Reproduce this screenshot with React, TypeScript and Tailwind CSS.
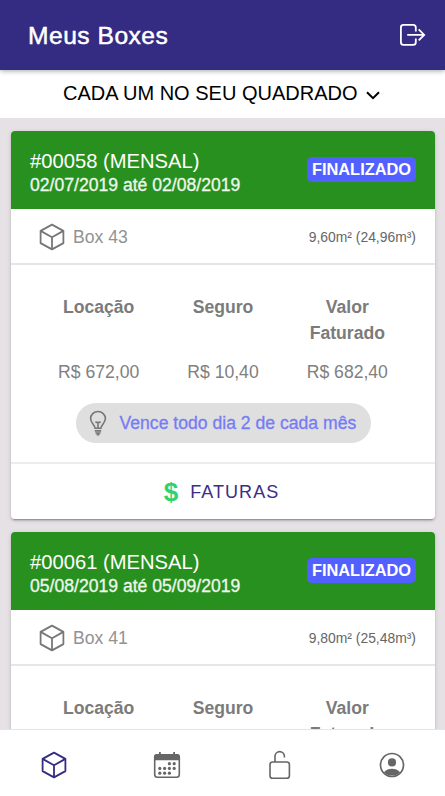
import React from 'react';

interface Box {
  id: string;
  period: string;
  name: string;
  size: string;
  rent: string;
  insurance: string;
  total: string;
  due: string;
}

const BOXES: Box[] = [
  {
    id: '#00058 (MENSAL)',
    period: '02/07/2019 até 02/08/2019',
    name: 'Box 43',
    size: '9,60m² (24,96m³)',
    rent: 'R$ 672,00',
    insurance: 'R$ 10,40',
    total: 'R$ 682,40',
    due: 'Vence todo dia 2 de cada mês',
  },
  {
    id: '#00061 (MENSAL)',
    period: '05/08/2019 até 05/09/2019',
    name: 'Box 41',
    size: '9,80m² (25,48m³)',
    rent: 'R$ 672,00',
    insurance: 'R$ 10,40',
    total: 'R$ 682,40',
    due: 'Vence todo dia 5 de cada mês',
  },
];

const CubeIcon: React.FC<{ className: string }> = ({ className }) => (
  <svg viewBox="0 0 28 28" fill="none" stroke="currentColor" strokeWidth="1.8" strokeLinejoin="round" className={className}>
    <path d="M14 1.6 25.4 7.9V20.1L14 26.4 2.6 20.1V7.9Z" />
    <path d="M2.6 7.9 14 14.3 25.4 7.9M14 14.3V26.4" />
  </svg>
);

const LogoutIcon = () => (
  <svg viewBox="0 0 28 24" fill="none" stroke="currentColor" strokeWidth="1.8" className="w-7 h-6">
    <path d="M16.8 8.4V4.4Q16.8 1.8 14.2 1.8H4.5Q1.9 1.8 1.9 4.4V19.3Q1.9 21.9 4.5 21.9H14.2Q16.8 21.9 16.8 19.3V15.4" />
    <path d="M8.2 11.9H25.4M19.7 6.4 25.2 11.9 19.7 17.4" />
  </svg>
);

const BulbIcon = () => (
  <svg viewBox="0 0 18 26" fill="none" stroke="currentColor" strokeWidth="1.6" className="w-[18px] h-[26px]">
    <path d="M6.1 18.3C6.1 14.8 1.6 13.2 1.6 8.5A7.4 7 0 0 1 16.4 8.5C16.4 13.2 11.9 14.8 11.9 18.3Z" />
    <path d="M9 18V12.6M6.4 11.8Q9 13.4 11.6 11.8" />
    <path d="M5.8 20.9H12.2M6.4 23H11.6M7.6 24.6H10.4" />
  </svg>
);

const CalendarIcon = () => (
  <svg viewBox="0 0 28 28" className="w-7 h-7">
    <rect x="1.7" y="3.7" width="24.6" height="22.6" rx="2.8" fill="none" stroke="currentColor" strokeWidth="1.6" />
    <path d="M1 9.3V6Q1 3 4 3H6V1H7.8V3H20.2V1H22V3H24Q27 3 27 6V9.3Z" fill="currentColor" />
    <g fill="currentColor">
      {[16.4, 21.2].map(x => <circle key={x} cx={x} cy="12.7" r="1.6" />)}
      {[6.8, 11.6, 16.4, 21.2].map(x => <circle key={x} cx={x} cy="17.4" r="1.6" />)}
      {[6.8, 11.6, 16.4].map(x => <circle key={x} cx={x} cy="22.2" r="1.6" />)}
    </g>
  </svg>
);

const LockIcon = () => (
  <svg viewBox="0 0 24 30" fill="none" stroke="currentColor" strokeWidth="1.6" className="w-6 h-[30px]">
    <rect x="2" y="12" width="19.4" height="16.3" rx="2.6" />
    <path d="M7 12V6.3A4.7 4.7 0 0 1 16.4 6.3V7.5" />
  </svg>
);

const PersonIcon = () => (
  <svg viewBox="0 0 26 26" className="w-[26px] h-[26px]">
    <circle cx="13" cy="13" r="11.5" fill="none" stroke="currentColor" strokeWidth="1.7" />
    <circle cx="13" cy="10.4" r="4.1" fill="currentColor" />
    <path d="M4.9 20.2C6.8 17.7 10 16.7 13 16.7S19.2 17.7 21.1 20.2A11.5 11.5 0 0 1 4.9 20.2Z" fill="currentColor" />
  </svg>
);

const BoxCard: React.FC<{ box: Box }> = ({ box }) => (
  <article className="shrink-0 rounded bg-white overflow-hidden shadow-[0_3px_1px_-2px_rgba(0,0,0,0.2),0_2px_2px_0_rgba(0,0,0,0.14),0_1px_5px_0_rgba(0,0,0,0.12)]">
    <header className="h-[78px] flex items-center justify-between bg-[#27901e] text-white px-[19px]">
      <div className="pt-1.5">
        <h2 className="text-[20.2px] leading-6">{box.id}</h2>
        <p className="text-[17.6px] leading-6 text-white/90 [-webkit-text-stroke:0.3px]">{box.period}</p>
      </div>
      <span className="h-[25px] w-[109px] mb-0.5 rounded-[5px] bg-[#5260ff] text-center text-[16.4px] leading-[25px] font-bold">FINALIZADO</span>
    </header>

    <div className="h-14 flex items-center border-b-2 border-[#e6e6e6] pl-[27px] pr-[19px]">
      <CubeIcon className="mt-0.5 w-7 h-7 text-[#777]" />
      <span className="ml-[7px] pt-0.5 text-[17.6px] text-[#929292]">{box.name}</span>
      <span className="ml-auto pt-0.5 text-[13.9px] text-[#666]">{box.size}</span>
    </div>

    <div className="h-[197px] pt-[29px] flex flex-col items-center text-[17.6px] text-[#808080]">
      <div className="grid grid-cols-3 w-[373px] text-center font-bold leading-[26px] text-[#7b7b7b]">
        <span>Locação</span>
        <span>Seguro</span>
        <span>Valor<br />Faturado</span>
      </div>
      <div className="grid grid-cols-3 w-[373px] text-center leading-[26px] mt-[13px]">
        <span>{box.rent}</span>
        <span>{box.insurance}</span>
        <span>{box.total}</span>
      </div>
      <div className="mt-[18px] h-10 w-[295px] rounded-full bg-[#dfdfdf] flex items-center pl-[13px]">
        <span className="text-[#777]"><BulbIcon /></span>
        <span className="ml-[13px] whitespace-nowrap text-[17.6px] text-[#757cf5] [-webkit-text-stroke:0.3px]">{box.due}</span>
      </div>
    </div>

    <button className="h-[57px] w-full border-t-2 border-[#ececec] flex items-center justify-center text-[#3b2e86] pr-[3px]">
      <span className="text-[26px] leading-none font-bold text-[#2dd36f]">$</span>
      <span className="ml-3 pt-px text-[18px] tracking-[1.05px]">FATURAS</span>
    </button>
  </article>
);

const App: React.FC = () => (
  <div className="h-screen flex flex-col overflow-hidden bg-[#e6e1e5] font-['Liberation_Sans',Arial,sans-serif]">
    <header className="relative z-10 h-[70px] shrink-0 flex items-center justify-between bg-[#342b82] text-white pl-7 pr-[18px] shadow-[0_1px_5px_rgba(0,0,0,0.35)]">
      <h1 className="pt-0.5 text-[24.6px] tracking-[0.5px] [-webkit-text-stroke:0.5px]">Meus Boxes</h1>
      <LogoutIcon />
    </header>

    <div className="h-12 shrink-0 flex items-center bg-white text-black pl-[63px] pb-0.5">
      <span className="text-[20px]">CADA UM NO SEU QUADRADO</span>
      <svg viewBox="0 0 14 9" fill="none" stroke="currentColor" strokeWidth="2" className="ml-[9px] mt-1 w-3.5 h-[9px]">
        <path d="M1 1.2 7 7.2 13 1.2" />
      </svg>
    </div>

    <main className="flex-1 min-h-0 overflow-hidden flex flex-col gap-[13px] pt-[13px] pl-[11px] pr-[10px]">
      {BOXES.map(box => <BoxCard key={box.id} box={box} />)}
    </main>

    <nav className="relative z-10 h-[67px] shrink-0 grid grid-cols-4 border-t border-[#e5e5e5] bg-white text-[#666]">
      <a className="flex items-center justify-center pt-1 pr-[3px]"><CubeIcon className="w-7 h-7 text-[#342b82]" /></a>
      <a className="flex items-center justify-center pt-1"><CalendarIcon /></a>
      <a className="flex items-center justify-center pt-1 pl-1"><LockIcon /></a>
      <a className="flex items-center justify-center pt-1 pl-[5px]"><PersonIcon /></a>
    </nav>
  </div>
);

export default App;
